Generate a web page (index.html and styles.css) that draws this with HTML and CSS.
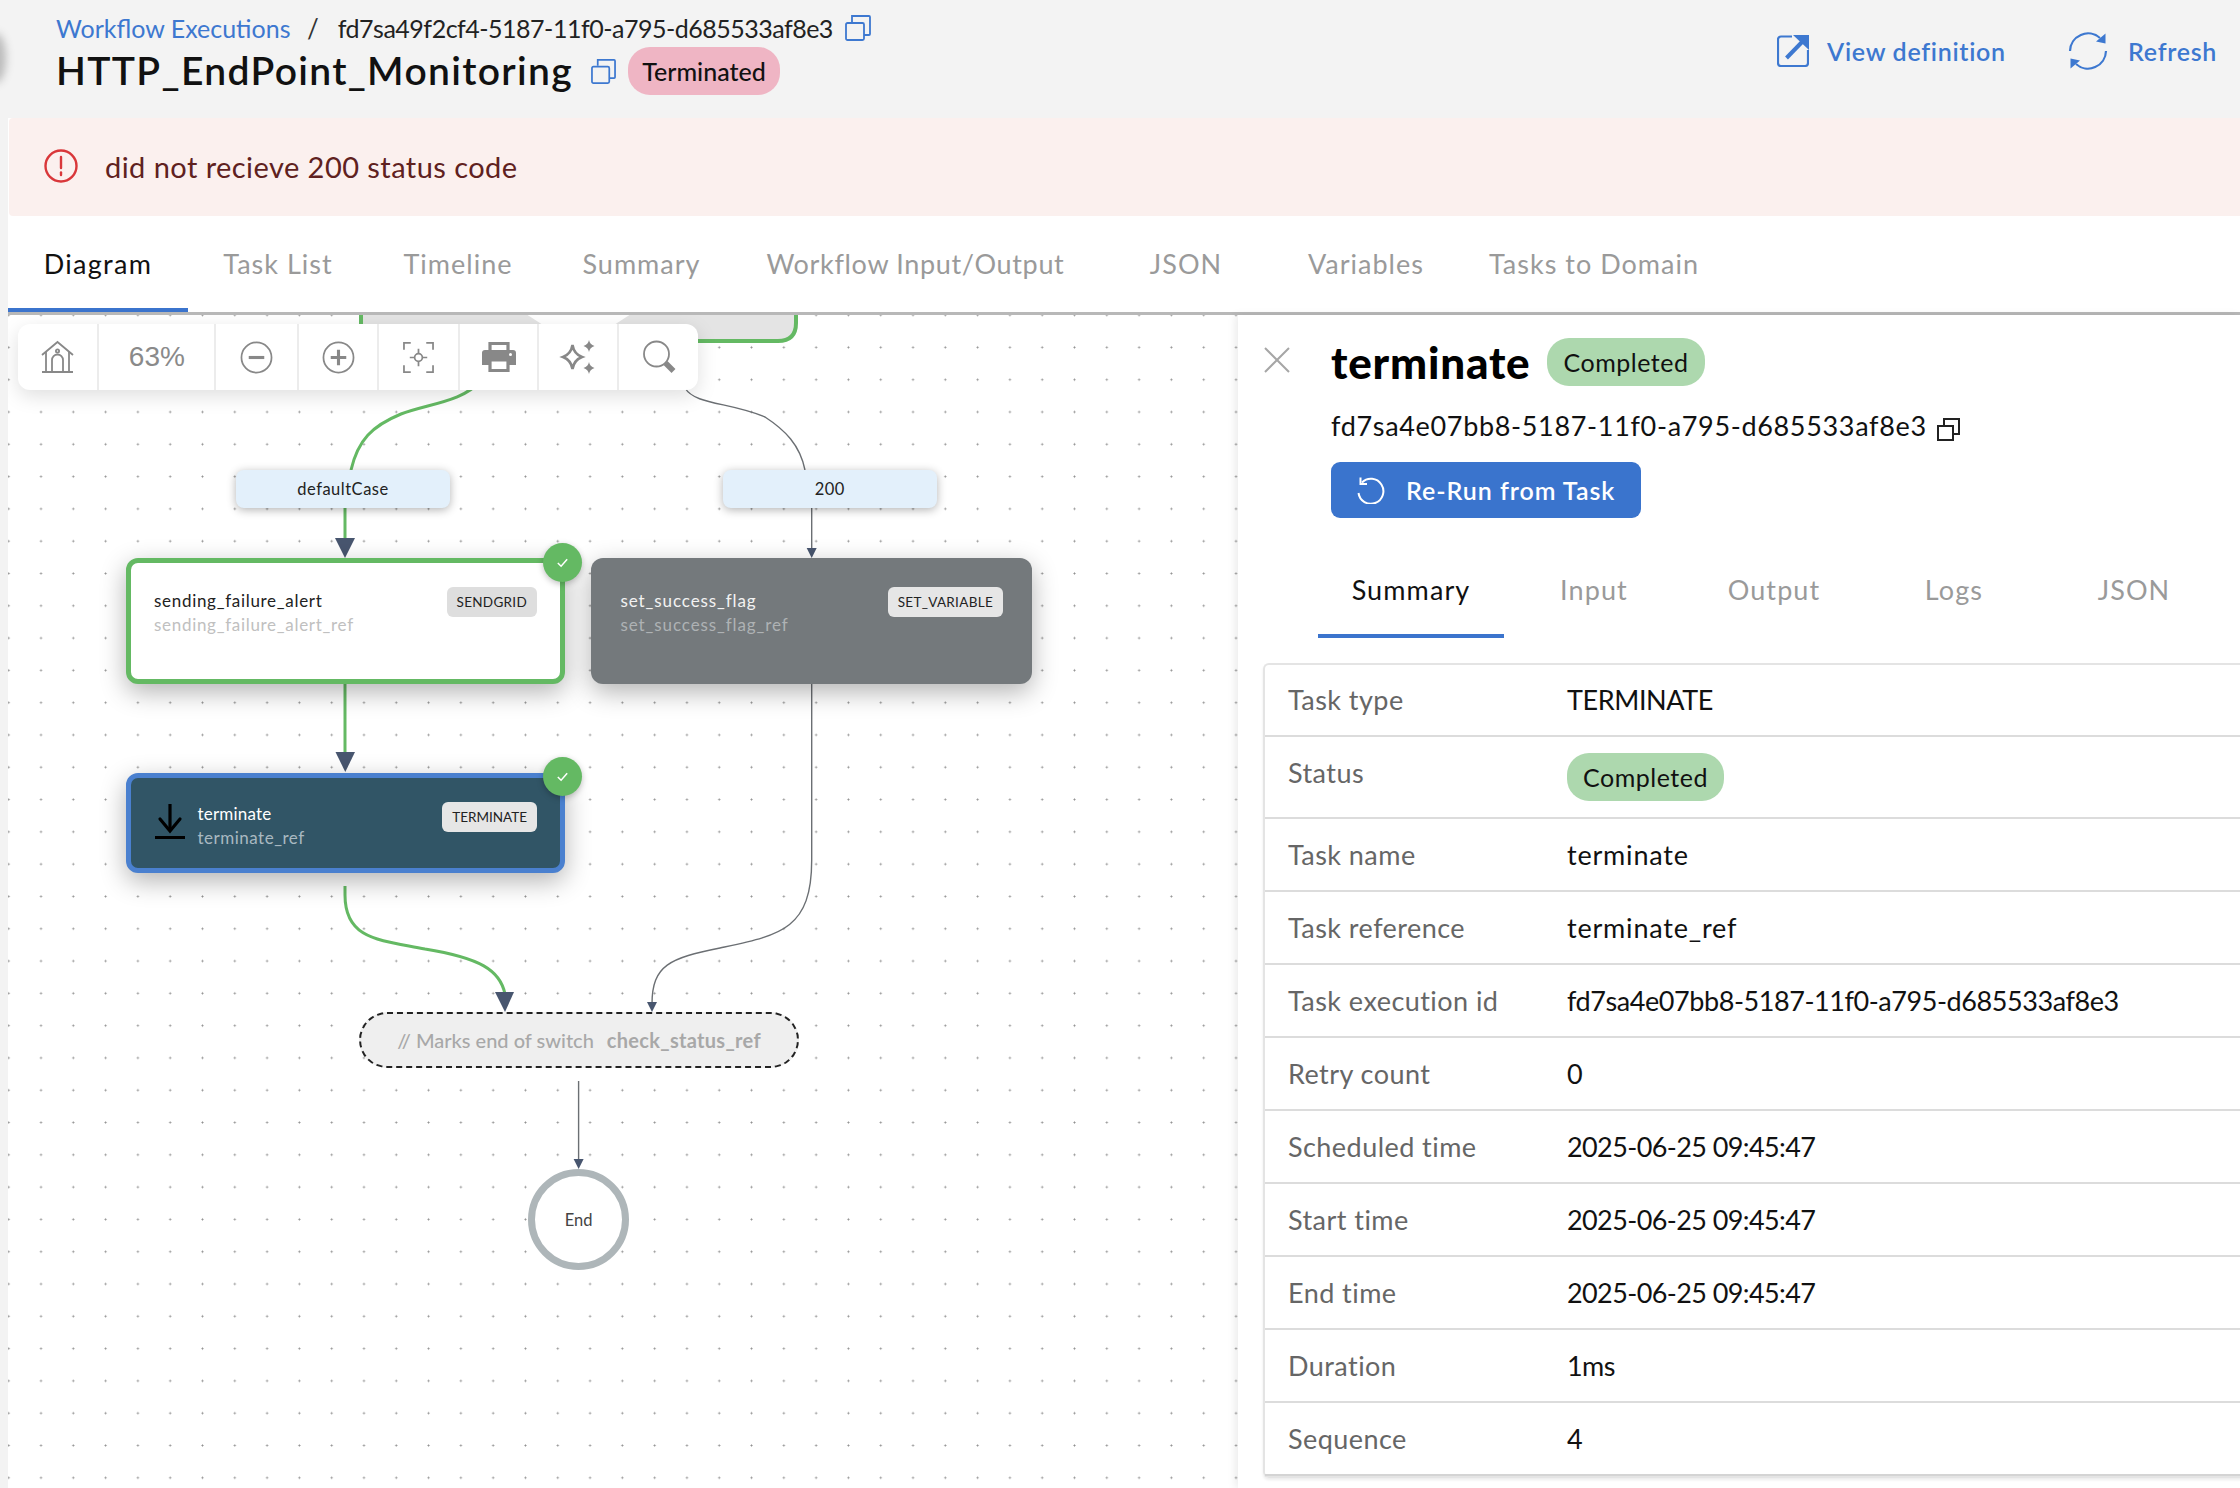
FILE: index.html
```html
<!DOCTYPE html>
<html lang="en">
<head>
<meta charset="utf-8">
<title>HTTP_EndPoint_Monitoring</title>
<link rel="stylesheet" href="styles.css">
</head>
<body>
<div class="edge-shadow"></div>
<header class="topbar">
  <div class="title-block">
    <div class="crumbs">
      <a class="crumb-link">Workflow Executions</a>
      <span class="crumb-sep">/</span>
      <span class="crumb-id">fd7sa49f2cf4-5187-11f0-a795-d685533af8e3</span>
      <svg class="copy-blue" viewBox="0 0 26 26"><path d="M7 7V1h17a1 1 0 0 1 1 1v17a1 1 0 0 1-1 1h-5"/><rect x="1" y="8" width="18" height="17" rx="1.5"/></svg>
    </div>
    <div class="title-row">
      <h1 class="wf-title">HTTP_EndPoint_Monitoring</h1>
      <svg class="copy-blue copy-title" viewBox="0 0 26 26"><path d="M7 7V1h17a1 1 0 0 1 1 1v17a1 1 0 0 1-1 1h-5"/><rect x="1" y="8" width="18" height="17" rx="1.5"/></svg>
      <span class="pill pill-red">Terminated</span>
    </div>
  </div>
  <div class="actions">
    <a class="action action-view">
      <svg class="ico-view" viewBox="0 0 32 32"><path class="ln" d="M15 1.500H4A3 3 0 0 0 1 4.500V28A3 3 0 0 0 4 31H28A3 3 0 0 0 31 28V15"/><path class="ln-bold" d="M9.500 23 26 6"/><path class="fl" d="M16 0H32V15Z"/></svg>
      <span>View definition</span>
    </a>
    <a class="action">
      <svg class="ico-refresh" viewBox="0 0 38 38"><path class="ln" d="M1 19A18 18 0 0 1 31 6"/><path class="fl" d="M36.500 1.500V11.500L27 9.500Z"/><g transform="rotate(180 19 19)"><path class="ln" d="M1 19A18 18 0 0 1 31 6"/><path class="fl" d="M36.500 1.500V11.500L27 9.500Z"/></g></svg>
      <span>Refresh</span>
    </a>
  </div>
</header>

<div class="content">
  <div class="alert">
    <svg class="ico-alert" viewBox="0 0 34 34"><circle cx="17" cy="17" r="15.500"/><path d="M17 8v11"/><path d="M17 23.500v2.500"/></svg>
    <span>did not recieve 200 status code</span>
  </div>

  <nav class="tabs">
    <a class="tab tab-active">Diagram</a>
    <a class="tab">Task List</a>
    <a class="tab">Timeline</a>
    <a class="tab tab-summary">Summary</a>
    <a class="tab tab-wide">Workflow Input/Output</a>
    <a class="tab">JSON</a>
    <a class="tab">Variables</a>
    <a class="tab tab-domain">Tasks to Domain</a>
  </nav>

  <main class="main">
    <section class="canvas">
      <svg class="edges" viewBox="8 315 1230 1173">
        <path class="clip-node" d="M361 305V330Q361 341 372 341H778Q796 341 796 323V305"/>
        <polygon class="clip-notch" points="526,314 631,314 614,325 543,325"/>
        <path class="edge-green" d="M481 380C464 402 426 404 401 414 372 426 358 440 351 470"/>
        <path class="edge-gray" d="M685 388C695 405 730 402 765 417 785 430 800 445 805 470"/>
        <path class="edge-green" d="M345 508V540"/>
        <polygon class="head" points="335,538 355,538 345,558"/>
        <path class="edge-gray" d="M811.700 508V550"/>
        <polygon class="head" points="806.700,548 816.700,548 811.700,558"/>
        <path class="edge-green" d="M345 684V754"/>
        <polygon class="head" points="335.500,752 355,752 345.300,772"/>
        <path class="edge-green" d="M345 886V895C345 940 380 940 425 949 480 958 500 970 505 994"/>
        <polygon class="head" points="495,992 514,992 505,1012"/>
        <path class="edge-gray" d="M811.700 684V860C811.700 930 780 935 720 948 670 958 652 965 652 1004"/>
        <polygon class="head" points="647,1002 657,1002 652,1012"/>
        <path class="edge-gray" d="M578.600 1081V1161"/>
        <polygon class="head" points="573.600,1159 583.600,1159 578.600,1169"/>
      </svg>

      <div class="edge-label label-default">defaultCase</div>
      <div class="edge-label label-200">200</div>

      <div class="node node-send">
        <div class="node-text">
          <div class="node-name">sending_failure_alert</div>
          <div class="node-ref">sending_failure_alert_ref</div>
        </div>
        <span class="node-tag tag-dark">SENDGRID</span>
      </div>

      <div class="node node-set">
        <div class="node-text">
          <div class="node-name">set_success_flag</div>
          <div class="node-ref">set_success_flag_ref</div>
        </div>
        <span class="node-tag">SET_VARIABLE</span>
      </div>

      <div class="node node-term">
        <svg class="ico-term" viewBox="0 0 30 36"><path d="M15 0V25"/><path d="M5 15 15 27 25 15"/><path d="M0 33.500H30"/></svg>
        <div class="node-text">
          <div class="node-name">terminate</div>
          <div class="node-ref">terminate_ref</div>
        </div>
        <span class="node-tag tag-term">TERMINATE</span>
      </div>

      <div class="badge badge-send"><svg viewBox="0 0 16 16"><path d="M3 8.500 6.500 12 13 4.500"/></svg></div>
      <div class="badge badge-term"><svg viewBox="0 0 16 16"><path d="M3 8.500 6.500 12 13 4.500"/></svg></div>

      <div class="join"><span>// Marks end of switch</span><b>check_status_ref</b></div>
      <div class="end-node">End</div>

      <div class="toolbar">
        <div class="tool tool-home"><svg viewBox="0 0 33 32"><path d="M1 14 16.500 1 32 14"/><path d="M5 11V31M28 11V31M1 31H32"/><path d="M11 31V19a5.500 5.500 0 0 1 11 0V31"/><circle cx="16.500" cy="10" r="1.600"/></svg></div>
        <div class="tool tool-zoom">63%</div>
        <div class="tool tool-minus"><svg viewBox="0 0 34 34"><circle cx="17" cy="17" r="15.500"/><path class="thick" d="M9 17H25"/></svg></div>
        <div class="tool tool-plus"><svg viewBox="0 0 34 34"><circle cx="17" cy="17" r="15.500"/><path class="thick" d="M9 17H25M17 9V25"/></svg></div>
        <div class="tool tool-fit"><svg viewBox="0 0 32 32"><path d="M1 8V1H8M24 1H31V8M31 24V31H24M8 31H1V24"/><circle cx="16" cy="16" r="4"/><path d="M16 7V12M16 20V25M7 16H12M20 16H25"/></svg></div>
        <div class="tool tool-print"><svg viewBox="0 0 34 30"><path class="solid" d="M3 8H31a3 3 0 0 1 3 3V23H27V18H7V23H0V11a3 3 0 0 1 3-3Z"/><path class="thick" d="M8 9V1.500H26V9"/><path class="thick" d="M8 18H26V28.500H8Z"/><circle class="dot" cx="28.500" cy="12.500" r="1.500"/></svg></div>
        <div class="tool tool-spark"><svg viewBox="0 0 32 34"><path d="M10.500 5Q12 14 20 17 12 20 10.500 29 9 20 1 17 9 14 10.500 5Z" class="mid"/><path class="solid" d="M27 0Q27.800 4.500 32.500 6 27.800 7.500 27 12 26.200 7.500 21.500 6 26.200 4.500 27 0Z"/><path class="solid" d="M27 22Q27.800 26.500 32.500 28 27.800 29.500 27 34 26.200 29.500 21.500 28 26.200 26.500 27 22Z"/></svg></div>
        <div class="tool tool-search"><svg viewBox="0 0 34 34"><circle cx="14.500" cy="14" r="12.500"/><path class="handle" d="M23.500 23 31.500 31"/></svg></div>
      </div>
    </section>

    <aside class="panel">
      <div class="panel-head">
        <svg class="ico-close" viewBox="0 0 26 26"><path d="M1 1 25 25M25 1 1 25"/></svg>
        <div class="panel-title-col">
          <div class="panel-title-row">
            <h2 class="task-title">terminate</h2>
            <span class="pill pill-green">Completed</span>
          </div>
          <div class="task-id">
            <span>fd7sa4e07bb8-5187-11f0-a795-d685533af8e3</span>
            <svg class="ico-copy-black" viewBox="0 0 23 23"><path d="M7 7V1H22V16H16"/><rect x="1" y="8" width="15" height="14"/></svg>
          </div>
          <button class="rerun">
            <svg viewBox="0 0 29 27"><path d="M6 5.500A12.500 12.500 0 1 1 2.500 16"/><path d="M4.500 0.500V7H11"/></svg>
            <span>Re-Run from Task</span>
          </button>
        </div>
      </div>

      <nav class="subtabs">
        <a class="subtab subtab-active">Summary</a>
        <a class="subtab">Input</a>
        <a class="subtab">Output</a>
        <a class="subtab">Logs</a>
        <a class="subtab">JSON</a>
      </nav>

      <div class="details">
        <div class="row row-first"><span class="key">Task type</span><span class="val val-caps">TERMINATE</span></div>
        <div class="row row-status"><span class="key">Status</span><span class="pill pill-green pill-table">Completed</span></div>
        <div class="row"><span class="key">Task name</span><span class="val val-text">terminate</span></div>
        <div class="row"><span class="key">Task reference</span><span class="val val-text">terminate_ref</span></div>
        <div class="row"><span class="key">Task execution id</span><span class="val val-id">fd7sa4e07bb8-5187-11f0-a795-d685533af8e3</span></div>
        <div class="row"><span class="key">Retry count</span><span class="val val-num">0</span></div>
        <div class="row"><span class="key">Scheduled time</span><span class="val val-num">2025-06-25 09:45:47</span></div>
        <div class="row"><span class="key">Start time</span><span class="val val-num">2025-06-25 09:45:47</span></div>
        <div class="row"><span class="key">End time</span><span class="val val-num">2025-06-25 09:45:47</span></div>
        <div class="row"><span class="key">Duration</span><span class="val val-num">1ms</span></div>
        <div class="row"><span class="key">Sequence</span><span class="val val-num">4</span></div>
      </div>
    </aside>
  </main>
</div>
</body>
</html>
```

FILE: styles.css
```css
* { box-sizing: border-box; }
html, body { margin: 0; padding: 0; height: 100%; overflow: hidden; }
body {
  width: 2240px; height: 1488px;
  background: #f3f3f3;
  font-family: "Lato", "Noto Sans", sans-serif;
  color: #111;
  position: relative;
}
a { color: inherit; text-decoration: none; }
svg { display: block; flex: none; }

.edge-shadow {
  position: absolute; left: -14px; top: 33px; width: 20px; height: 50px;
  border-radius: 50%;
  background: #777; filter: blur(4px); opacity: .45;
}

/* Header */
.topbar { height: 118px; display: flex; justify-content: space-between; padding: 0 23px 0 56px; }
.title-block { display: flex; flex-direction: column; padding-top: 12px; }
.crumbs { display: flex; align-items: center; height: 32px; font-size: 25px; }
.crumb-link { color: #3d78d0; width: 234px; white-space: nowrap; }
.crumb-sep { margin: 0 19px 0 17px; color: #333; font-size: 26px; }
.crumb-id { color: #222; width: 496px; white-space: nowrap; letter-spacing: -.5px; }
.copy-blue { width: 26px; height: 26px; margin-left: 11px; fill: none; stroke: #3d78d0; stroke-width: 1.800; }
.title-row { display: flex; align-items: center; height: 48px; margin-top: 3px; }
.wf-title { margin: -2px 0 0; font-size: 39px; font-weight: 600; color: #111; width: 514px; white-space: nowrap; letter-spacing: 1.330px; }
.copy-title { width: 25px; height: 25px; margin: 0 12px 0 21px; }
.pill { display: inline-flex; align-items: center; justify-content: center; border-radius: 22px; height: 48px; font-size: 25px; color: #111; white-space: nowrap; letter-spacing: .5px; }
.pill-red { background: #efb5c4; width: 152px; letter-spacing: 0; font-weight: 500; }
.pill-green { background: #add8ae; width: 158px; }
.actions { display: flex; align-items: center; height: 40px; margin-top: 31px; color: #3d78d0; font-size: 25px; font-weight: 600; letter-spacing: .7px; }
.action { display: flex; align-items: center; white-space: nowrap; }
.action-view { margin-right: 66px; width: 226px; }
.ico-view { width: 32px; height: 32px; margin-right: 18px; }
.ico-refresh { width: 38px; height: 38px; margin-right: 21px; overflow: visible; }
.ln { fill: none; stroke: #3d78d0; stroke-width: 2.200; }
.ln-bold { fill: none; stroke: #3d78d0; stroke-width: 4; }
.fl { fill: #3d78d0; }

/* Content column */
.content { margin-left: 8px; background: #fff; height: 1370px; display: flex; flex-direction: column; }
.alert { height: 98px; background: #fbf0ee; display: flex; align-items: center; padding: 0 0 2px 35px; font-size: 29px; color: #5f2120; margin-left: 1px; border-radius: 4px 0 0 4px; letter-spacing: .45px; }
.ico-alert { width: 34px; height: 34px; margin-right: 27px; fill: none; stroke: #d9373a; stroke-width: 2.400; stroke-linecap: round; }

.tabs { height: 99px; display: flex; border-bottom: 3px solid #b8b8b8; font-size: 27px; color: #9a9a9a; flex: none; letter-spacing: 1px; }
.tab { min-width: 180px; padding: 0 24px 2px; height: 96px; display: flex; align-items: center; justify-content: center; white-space: nowrap; }
.tab-summary { min-width: 187px; }
.tab-wide { width: 361px; letter-spacing: .66px; }
.tab-domain { padding-left: 33px; }
.tab-active { color: #111; box-shadow: inset 0 -4px 0 #3b74cd; letter-spacing: 1.300px; }

.main { flex: 1; display: flex; min-height: 0; }

/* Diagram */
.canvas {
  width: 1230px; position: relative; overflow: hidden; flex: none;
  background-color: #fff;
  background-image: radial-gradient(circle at center, #8f8f8f 0, #8f8f8f .8px, transparent 1.200px);
  background-size: 32.300px 32.300px;
  background-position: -15.450px -16.050px;
}
.edges { position: absolute; left: 0; top: 0; width: 1230px; height: 1173px; }
.clip-node { fill: #e4e4e4; stroke: #64b963; stroke-width: 4; }
.clip-notch { fill: #fff; }
.edge-green { fill: none; stroke: #64b963; stroke-width: 3; }
.edge-gray { fill: none; stroke: #6b6f73; stroke-width: 1.400; }
.head { fill: #48566f; }

.edge-label {
  position: absolute; top: 155px; height: 38px;
  background: #e3f0fb; border-radius: 8px;
  box-shadow: 0 2px 10px rgba(0,0,0,.3);
  display: flex; align-items: center; justify-content: center;
  font-size: 16.500px; color: #222; letter-spacing: .5px;
}
.label-default { left: 228px; width: 214px; }
.label-200 { left: 714.500px; width: 214.500px; }

.node {
  position: absolute; display: flex; align-items: flex-start; border-radius: 12px;
  box-shadow: 0 8px 26px rgba(0,0,0,.3);
}
.node-text { flex: 1; min-width: 0; white-space: nowrap; letter-spacing: .7px; }
.node-name { font-size: 17px; line-height: 24px; }
.node-ref { font-size: 17px; line-height: 24px; }
.node-tag {
  height: 30px; display: flex; align-items: center; padding: 0 10px; border-radius: 6px;
  background: #e6e6e6; color: #222; font-size: 13.500px; white-space: nowrap; letter-spacing: .3px;
}
.tag-dark { background: #dedede; }
.tag-term { letter-spacing: 0; }
.node-send { left: 118px; top: 243px; width: 439px; height: 126px; background: #fff; border: 5px solid #64b963; padding: 24px 23px 0; color: #222; }
.node-send .node-name { color: #222; margin-top: 2px; }
.node-send .node-ref { color: #c0c0c0; }
.node-set { left: 583px; top: 243px; width: 441px; height: 126px; background: #74797c; padding: 29px 29px 0 29.500px; }
.node-set .node-text { letter-spacing: .9px; }
.node-set .node-name { color: #f2f2f2; margin-top: 2px; }
.node-set .node-ref { color: #aeb2b4; }
.node-term { left: 117.500px; top: 458px; width: 439.500px; height: 100px; background: #315566; border: 5px solid #4a80cf; padding: 24px 23px 0 24px; }
.node-term .node-name { color: #fff; margin-top: 0; letter-spacing: .2px; }
.node-term .node-ref { color: #a9b9c1; letter-spacing: .5px; }
.ico-term { width: 30px; height: 36px; margin: 2px 13px 0 0; fill: none; stroke: #000; stroke-width: 3.200; stroke-linecap: round; }

.badge {
  position: absolute; left: 534.500px; width: 39px; height: 39px; border-radius: 50%;
  background: #64b963; display: flex; align-items: center; justify-content: center;
  box-shadow: 0 2px 6px rgba(0,0,0,.25);
}
.badge svg { width: 15px; height: 15px; fill: none; stroke: #fff; stroke-width: 1.600; }
.badge-send { top: 227.500px; }
.badge-term { top: 441.500px; }

.join {
  position: absolute; left: 351px; top: 697px; width: 440px; height: 56px;
  border: 2px dashed #222; border-radius: 28px; background: #efefef;
  display: flex; align-items: center; justify-content: center;
  font-size: 20px; color: #a8a8a8; white-space: nowrap; font-weight: 500;
}
.join b { margin-left: 13px; font-weight: 700; letter-spacing: .3px; }
.end-node {
  position: absolute; left: 520px; top: 854px; width: 101px; height: 101px; border-radius: 50%;
  border: 7px solid #aeb6b9; background: #fff;
  display: flex; align-items: center; justify-content: center;
  font-size: 16.500px; color: #444;
}

.toolbar {
  position: absolute; left: 9.500px; top: 9px; width: 680.500px; height: 66px;
  background: #fff; border-radius: 12px; display: flex;
  box-shadow: 0 6px 20px rgba(0,0,0,.13);
}
.tool { display: flex; align-items: center; justify-content: center; border-right: 2px solid #ececec; height: 66px; }
.tool:last-child { border-right: 0; }
.tool svg { fill: none; stroke: #888; stroke-width: 1.800; overflow: visible; }
.tool-home { width: 82px; } .tool-home svg { width: 33px; height: 32px; }
.tool-zoom { width: 117px; font-family: "Liberation Sans", sans-serif; font-size: 28px; color: #8a8a8a; }
.tool-minus { width: 83px; } .tool-minus svg { width: 33px; height: 33px; }
.tool-plus { width: 80px; } .tool-plus svg { width: 33px; height: 33px; }
.tool-fit { width: 81px; } .tool-fit svg { width: 31px; height: 31px; }
.tool-print { width: 79px; } .tool-print svg { width: 34px; height: 30px; }
.tool-spark { width: 80px; } .tool-spark svg { width: 32px; height: 34px; }
.tool-search { width: 79px; } .tool-search svg { width: 34px; height: 34px; }
.tool svg .thick { stroke-width: 3.200; }
.tool svg .mid { stroke-width: 2.600; }
.tool svg .solid { fill: #888; stroke: none; }
.tool svg .dot { fill: #fff; stroke: none; }
.tool svg .handle { stroke-width: 5.500; }

/* Side panel */
.panel { flex: 1; min-width: 0; background: #fff; overflow: hidden; position: relative; box-shadow: -3px 0 8px rgba(0,0,0,.08); }
.panel-head { display: flex; padding: 23px 0 0 26px; }
.ico-close { width: 26px; height: 26px; margin: 9px 41px 0 0; fill: none; stroke: #a6a6a6; stroke-width: 2; }
.panel-title-col { display: flex; flex-direction: column; align-items: flex-start; }
.panel-title-row { display: flex; align-items: center; height: 48px; }
.task-title { margin: 0 18px 0 0; font-size: 44px; font-weight: 900; color: #000; width: 198px; white-space: nowrap; letter-spacing: .8px; }
.task-id { display: flex; align-items: center; height: 36px; margin-top: 21px; font-size: 27px; color: #111; white-space: nowrap; letter-spacing: .67px; }
.ico-copy-black { width: 23px; height: 23px; margin: 8px 0 0 10px; fill: none; stroke: #222; stroke-width: 2; }
.rerun {
  display: flex; align-items: center; margin-top: 19px; width: 310px; height: 56px;
  background: #3a74cd; color: #fff; border: 0; border-radius: 9px; padding: 0 0 0 25px;
  font: 600 25px "Lato", sans-serif; letter-spacing: .95px;
}
.rerun svg { width: 29px; height: 27px; margin-right: 21px; fill: none; stroke: #fff; stroke-width: 2; }

.subtabs { display: flex; margin: 24px 0 0 80px; height: 96px; font-size: 27px; color: #9a9a9a; letter-spacing: 1.100px; }
.subtab { width: 180px; display: flex; align-items: center; justify-content: center; height: 96px; padding-bottom: 2px; }
.subtab-active { width: 186px; color: #111; box-shadow: inset 0 -4px 0 #3b74cd; }

.details {
  margin: 25px -20px 0 25px; border: 2px solid #e4e4e4; border-right: 0; border-radius: 6px 0 0 6px;
  box-shadow: 0 2px 3px rgba(0,0,0,.08);
}
.row { display: flex; align-items: center; height: 73px; padding-left: 23px; padding-bottom: 1px; border-bottom: 2px solid #dcdcdc; font-size: 27px; }
.row-first { height: 72px; }
.row-status { height: 82px; align-items: flex-start; padding-top: 19px; }
.row:last-child { border-bottom-color: #d4d4d4; }
.key { width: 279px; color: #666; white-space: nowrap; flex: none; letter-spacing: .45px; }
.val { color: #111; white-space: nowrap; }
.val-caps { letter-spacing: -.4px; }
.val-text { letter-spacing: .8px; }
.val-id { letter-spacing: -.43px; }
.val-num { letter-spacing: -.6px; }
.pill-table { width: 157px; margin-top: -3px; }
```
